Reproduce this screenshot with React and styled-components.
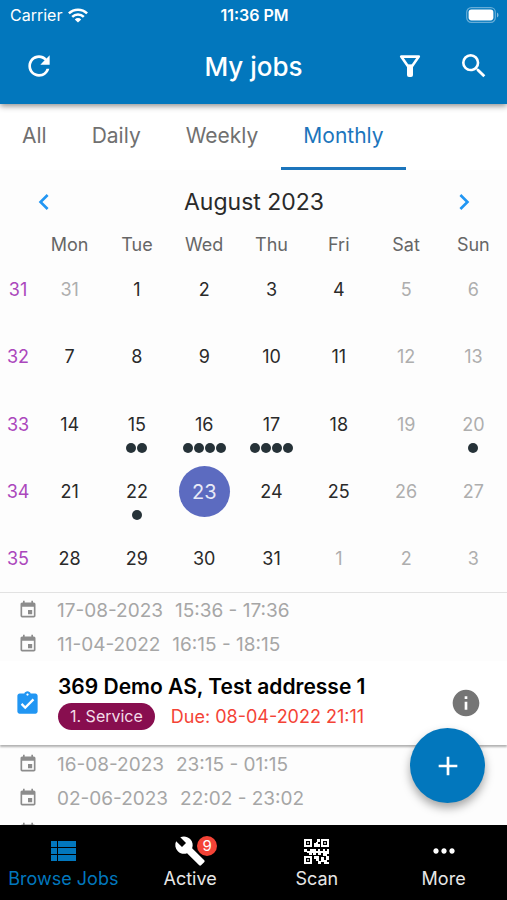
import React, { useState } from 'react'
import styled, { createGlobalStyle } from 'styled-components'
import {
  MdRefresh,
  MdSearch,
  MdChevronLeft,
  MdChevronRight,
  MdEvent,
  MdAssignmentTurnedIn,
  MdInfo,
  MdAdd,
  MdMoreHoriz,
} from 'react-icons/md'

const tabs = ['All', 'Daily', 'Weekly', 'Monthly']
const weekdays = ['Mon', 'Tue', 'Wed', 'Thu', 'Fri', 'Sat', 'Sun']
const weeks = [
  { number: 31, days: [31, 1, 2, 3, 4, 5, 6] },
  { number: 32, days: [7, 8, 9, 10, 11, 12, 13] },
  { number: 33, days: [14, 15, 16, 17, 18, 19, 20] },
  { number: 34, days: [21, 22, 23, 24, 25, 26, 27] },
  { number: 35, days: [28, 29, 30, 31, 1, 2, 3] },
]
// number of jobs per day of the month
const events = { 15: 2, 16: 4, 17: 4, 20: 1, 22: 1 }

const isOutside = (week, day) =>
  (week === 31 && day > 7) || (week === 35 && day < 7)

const FilterIcon = () => (
  <svg width="32" height="32" viewBox="0 0 32 32" aria-hidden="true">
    <path
      d="M7.2 6.6h17.6L18.2 16h-4.4z"
      fill="none"
      stroke="currentColor"
      strokeWidth="2.6"
      strokeLinejoin="round"
    />
    <path
      d="M13 14.5h6v10.6a2 2 0 0 1-2 2h-2a2 2 0 0 1-2-2z"
      fill="currentColor"
    />
  </svg>
)

const WifiIcon = () => (
  <svg width="20" height="15" viewBox="0 0 20 15" aria-hidden="true">
    <g fill="none" stroke="currentColor" strokeWidth="2.5">
      <path d="M.9 5.4a13 13 0 0 1 18.2 0" />
      <path d="M4.2 8.8a8.3 8.3 0 0 1 11.6 0" />
    </g>
    <path d="M10 14.6l-3.2-3.2a4.6 4.6 0 0 1 6.4 0z" fill="currentColor" />
  </svg>
)

const BatteryIcon = () => (
  <svg width="33" height="16" viewBox="0 0 33 16" aria-hidden="true">
    <rect
      x=".7" y=".7" width="28.6" height="14.6" rx="4.6"
      fill="none" stroke="#fff" strokeOpacity=".4" strokeWidth="1.2"
    />
    <rect x="2.6" y="2.6" width="24.8" height="10.8" rx="2.8" fill="#fff" />
    <path d="M31 5.5a2.8 2.8 0 0 1 0 5z" fill="#fff" fillOpacity=".5" />
  </svg>
)

const ListIcon = () => (
  <svg width="25" height="20" viewBox="0 0 25 20" fill="currentColor" aria-hidden="true">
    <path d="M0 0h6v6H0zM7 0h18v6H7zM0 7h6v6H0zM7 7h18v6H7zM0 14h6v6H0zM7 14h18v6H7z" />
  </svg>
)

const WrenchIcon = () => (
  <svg width="32" height="32" viewBox="0 0 24 24" aria-hidden="true">
    <path
      d="M22.7 19l-9.1-9.1c.9-2.3.4-5-1.5-6.9-2-2-5-2.4-7.4-1.3L9 6 6 9 1.6 4.7C.4 7.1.9 10.1 2.9 12.1c1.9 1.9 4.6 2.4 6.9 1.5l9.1 9.1c.4.4 1 .4 1.4 0l2.3-2.3c.5-.4.5-1.1.1-1.4z"
      fill="currentColor"
    />
  </svg>
)

const QrIcon = () => (
  <svg width="25" height="25" viewBox="0 0 25 25" fill="currentColor" aria-hidden="true">
    {[[0, 0], [17, 0], [0, 17]].map(([x, y]) => (
      <g key={`${x}-${y}`}>
        <rect
          x={x + 1} y={y + 1} width="6" height="6"
          fill="none" stroke="currentColor" strokeWidth="2"
        />
        <rect x={x + 3} y={y + 3} width="2" height="2" opacity=".7" />
      </g>
    ))}
    <path d="M13 0h3v3h-2v2h2v3h-6V4h2V3h1z" />
    <path d="M0 10h3v2h3v-2h6v2h2v-2h2v2h3v-2h2v2h2v-2h2v5h-2v2h-4v-3h-2v2h-3v-2h-2v2h-3v-2H8v2H5v-2H3v-1H0z" />
    <path d="M10 17h5v5h2v3h-3v-3h-2v-2h-2zM17 18h3v3h2v-4h3v4h-2v2h2v2h-5v-2h-3z" />
  </svg>
)

const Slot = ({ date, time }) => (
  <SlotRow>
    <MdEvent size={20} />
    <span>{date}</span>
    <span>{time}</span>
  </SlotRow>
)

const App = () => {
  const [tab, setTab] = useState('Monthly')
  const [selected, setSelected] = useState('34-23')
  const [page, setPage] = useState('Browse Jobs')

  const navItems = [
    { label: 'Browse Jobs', icon: <ListIcon /> },
    { label: 'Active', icon: <WrenchIcon />, badge: 9 },
    { label: 'Scan', icon: <QrIcon /> },
    { label: 'More', icon: <MdMoreHoriz size={32} /> },
  ]

  return (
    <Screen>
      <GlobalStyle />
      <Header>
        <StatusBar>
          <Carrier>
            Carrier <WifiIcon />
          </Carrier>
          <Clock>11:36 PM</Clock>
          <Battery>
            <BatteryIcon />
          </Battery>
        </StatusBar>
        <AppBar>
          <Actions>
            <IconButton aria-label="Refresh"><MdRefresh size={32} /></IconButton>
          </Actions>
          <h1>My jobs</h1>
          <Actions $end>
            <IconButton aria-label="Filter"><FilterIcon /></IconButton>
            <IconButton aria-label="Search"><MdSearch size={32} /></IconButton>
          </Actions>
        </AppBar>
      </Header>

      <Tabs>
        {tabs.map((t) => (
          <Tab key={t} $active={t === tab} onClick={() => setTab(t)}>
            {t}
          </Tab>
        ))}
      </Tabs>

      <Calendar>
        <MonthBar>
          <MonthButton aria-label="Previous month">
            <MdChevronLeft size={32} />
          </MonthButton>
          <h2>August 2023</h2>
          <MonthButton aria-label="Next month">
            <MdChevronRight size={32} />
          </MonthButton>
        </MonthBar>
        <WeekRow>
          <span />
          {weekdays.map((d) => <Weekday key={d}>{d}</Weekday>)}
        </WeekRow>
        {weeks.map(({ number, days }) => (
          <WeekRow key={number}>
            <WeekNumber>{number}</WeekNumber>
            {days.map((day, index) => {
              const id = `${number}-${day}`
              const outside = isOutside(number, day)
              return (
                <Day
                  key={id}
                  $muted={outside || index > 4}
                  onClick={() => setSelected(id)}
                >
                  <DayNumber $selected={id === selected}>{day}</DayNumber>
                  {!outside && events[day] && (
                    <Dots>
                      {Array.from({ length: events[day] }, (_, i) => <i key={i} />)}
                    </Dots>
                  )}
                </Day>
              )
            })}
          </WeekRow>
        ))}
      </Calendar>

      <JobArea>
        <JobList>
          <Slot date="17-08-2023" time="15:36 - 17:36" />
          <Slot date="11-04-2022" time="16:15 - 18:15" />
          <JobCard>
            <JobIcon><MdAssignmentTurnedIn size={27} /></JobIcon>
            <JobText>
              <h3>369 Demo AS, Test addresse 1</h3>
              <JobMeta>
                <Chip>1. Service</Chip>
                <Due>Due: 08-04-2022 21:11</Due>
              </JobMeta>
            </JobText>
            <InfoButton aria-label="Job details"><MdInfo size={32} /></InfoButton>
          </JobCard>
          <Slot date="16-08-2023" time="23:15 - 01:15" />
          <Slot date="02-06-2023" time="22:02 - 23:02" />
          <SlotRow><MdEvent size={20} /></SlotRow>
        </JobList>
        <AddButton aria-label="Add job"><MdAdd size={32} /></AddButton>
      </JobArea>

      <BottomNav>
        {navItems.map(({ label, icon, badge }) => (
          <NavButton
            key={label}
            $active={label === page}
            onClick={() => setPage(label)}
          >
            <NavIcon>
              {icon}
              {badge && <Badge>{badge}</Badge>}
            </NavIcon>
            {label}
          </NavButton>
        ))}
      </BottomNav>
    </Screen>
  )
}

const GlobalStyle = createGlobalStyle`
  * {
    box-sizing: border-box;
  }
  body {
    margin: 0;
    font-family: Inter, Roboto, sans-serif;
    background: #fdfdfd;
  }
  h1, h2, h3 {
    margin: 0;
    font-weight: 400;
  }
  button {
    padding: 0;
    border: none;
    background: transparent;
    color: inherit;
    font-family: inherit;
    cursor: pointer;
  }
  svg {
    display: block;
    flex-shrink: 0;
  }
`

const Screen = styled.div`
  display: flex;
  flex-direction: column;
  height: 100vh;
  background: #fdfdfd;
`

const Header = styled.header`
  position: relative;
  z-index: 1;
  flex-shrink: 0;
  background: #0277bd;
  color: #fff;
  box-shadow: 0 2px 6px rgba(0, 0, 0, 0.45);
`

const StatusBar = styled.div`
  display: grid;
  grid-template-columns: 1fr auto 1fr;
  align-items: center;
  height: 30px;
  padding: 0 8px 0 10px;
  font-size: 16px;
`

const Carrier = styled.span`
  display: flex;
  align-items: center;
  gap: 6px;
`

const Clock = styled.span`
  font-weight: 600;
`

const Battery = styled.span`
  justify-self: end;
`

const AppBar = styled.div`
  display: grid;
  grid-template-columns: 1fr auto 1fr;
  align-items: center;
  height: 74px;
  padding: 0 17px 2px;
  h1 {
    font-size: 26px;
    font-weight: 500;
  }
`

const Actions = styled.div`
  display: flex;
  gap: 32px;
  padding-left: 6px;
  justify-content: ${({ $end }) => ($end ? 'flex-end' : 'flex-start')};
`

const IconButton = styled.button`
  width: 32px;
  height: 32px;
`

const Tabs = styled.nav`
  display: flex;
  flex-shrink: 0;
  gap: 1px;
  height: 66px;
  background: #fff;
`

const Tab = styled.button`
  padding: 0 22px;
  font-size: 21px;
  color: ${({ $active }) => ($active ? '#1c75bc' : '#707070')};
  border-bottom: 3px solid ${({ $active }) => ($active ? '#1c75bc' : 'transparent')};
`

const Calendar = styled.section`
  flex-shrink: 0;
  border-bottom: 1px solid #e2e2e2;
`

const MonthBar = styled.div`
  display: flex;
  align-items: center;
  justify-content: space-between;
  height: 64px;
  padding: 0 27px 0 28px;
  h2 {
    font-size: 23px;
    color: #2a2a2a;
  }
`

const MonthButton = styled.button`
  color: #2196f3;
`

const WeekRow = styled.div`
  display: grid;
  grid-template-columns: 36px repeat(7, 1fr);
  font-size: 18px;
`

const Weekday = styled.span`
  line-height: 22px;
  text-align: center;
  color: #666;
`

const WeekNumber = styled.span`
  align-self: center;
  text-align: center;
  color: #ab47bc;
`

const Day = styled.button`
  position: relative;
  display: flex;
  align-items: center;
  justify-content: center;
  aspect-ratio: 1;
  font-size: 18px;
  color: ${({ $muted }) => ($muted ? '#aeaeae' : '#2a2a2a')};
`

const DayNumber = styled.span`
  display: flex;
  align-items: center;
  justify-content: center;
  width: 51px;
  height: 51px;
  border-radius: 50%;
  ${({ $selected }) => $selected && `
    background: #5c6bc0;
    color: #e8eaf6;
    font-size: 20px;
  `}
`

const Dots = styled.span`
  position: absolute;
  right: 0;
  bottom: 5px;
  left: 0;
  display: flex;
  justify-content: center;
  gap: 1px;
  i {
    width: 10px;
    height: 10px;
    border-radius: 50%;
    background: #263238;
  }
`

const JobArea = styled.main`
  position: relative;
  flex: 1;
  min-height: 0;
`

const JobList = styled.div`
  height: 100%;
  overflow: hidden;
`

const SlotRow = styled.div`
  display: flex;
  align-items: center;
  gap: 12px;
  height: 34px;
  padding-left: 18px;
  font-size: 19px;
  color: #a6a6a6;
  svg {
    margin-right: 7px;
    color: #8c8c8c;
  }
`

const JobCard = styled.article`
  display: flex;
  align-items: center;
  height: 84px;
  margin-bottom: 2px;
  padding-right: 25px;
  background: #fff;
  box-shadow: 0 2px 2px rgba(0, 0, 0, 0.3);
`

const JobIcon = styled.span`
  width: 58px;
  padding-left: 14px;
  color: #2196f3;
`

const JobText = styled.div`
  flex: 1;
  padding-bottom: 3px;
  h3 {
    margin-bottom: 2px;
    font-size: 21px;
    font-weight: 600;
    line-height: 28px;
    color: #000;
  }
`

const JobMeta = styled.div`
  display: flex;
  align-items: center;
  gap: 16px;
`

const Chip = styled.span`
  padding: 0 12px;
  border-radius: 14px;
  background: #880e4f;
  color: #f3dce8;
  font-size: 16px;
  line-height: 27px;
`

const Due = styled.span`
  font-size: 18px;
  color: #f44336;
`

const InfoButton = styled.button`
  color: #757575;
`

const AddButton = styled.button`
  position: absolute;
  right: 22px;
  bottom: 22px;
  display: flex;
  align-items: center;
  justify-content: center;
  width: 75px;
  height: 75px;
  border-radius: 50%;
  background: #0277bd;
  color: #fff;
  box-shadow: 0 5px 10px rgba(0, 0, 0, 0.35);
`

const BottomNav = styled.nav`
  position: relative;
  display: grid;
  grid-template-columns: repeat(4, 1fr);
  flex-shrink: 0;
  height: 75px;
  background: #000;
`

const NavButton = styled.button`
  display: flex;
  flex-direction: column;
  align-items: center;
  padding-top: 10px;
  font-size: 18px;
  line-height: 24px;
  color: ${({ $active }) => ($active ? '#0277bd' : '#e6e6e6')};
  svg {
    color: ${({ $active }) => ($active ? '#0277bd' : '#fff')};
  }
`

const NavIcon = styled.span`
  position: relative;
  display: flex;
  align-items: center;
  justify-content: center;
  width: 34px;
  height: 32px;
`

const Badge = styled.span`
  position: absolute;
  top: 1px;
  right: -10px;
  width: 20px;
  height: 20px;
  border-radius: 50%;
  background: #f44336;
  color: #fff;
  font-size: 15px;
  line-height: 20px;
`

export default App
